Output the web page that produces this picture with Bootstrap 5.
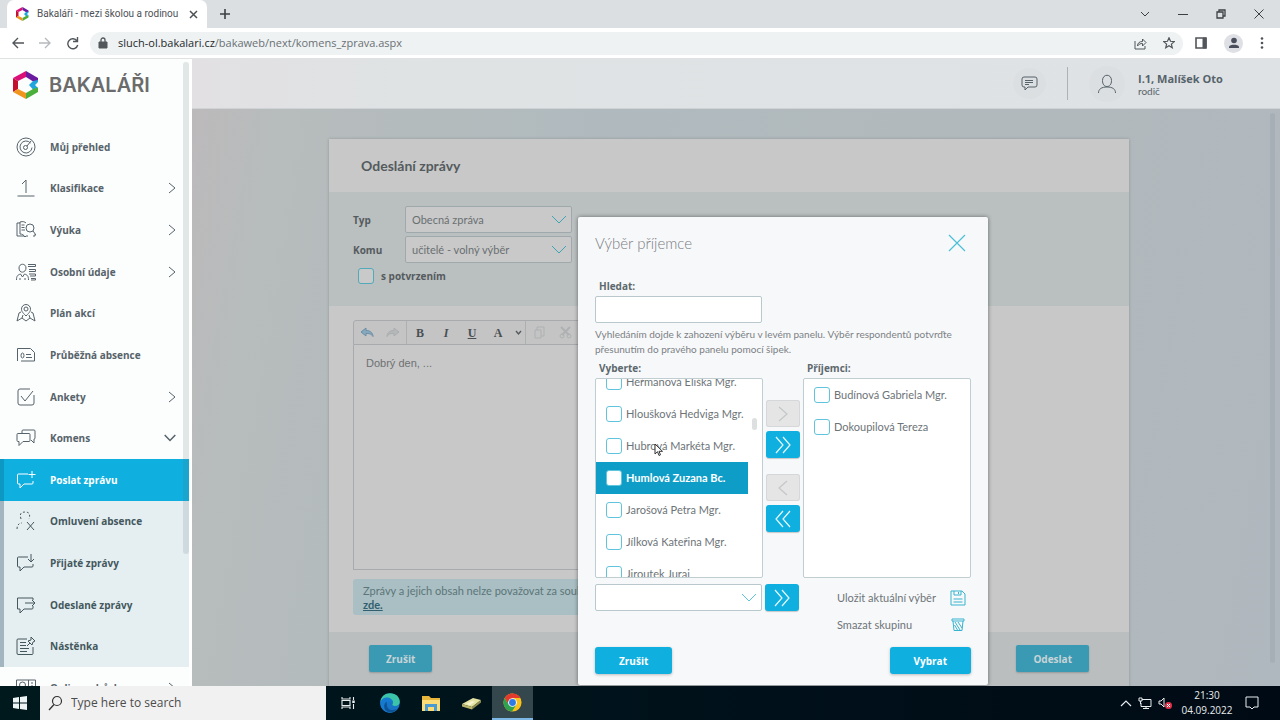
<!DOCTYPE html>
<html lang="cs">
<head>
<meta charset="utf-8">
<meta name="viewport" content="width=device-width, initial-scale=1">
<title>Bakaláři - mezi školou a rodinou</title>
<link rel="stylesheet" href="https://cdn.jsdelivr.net/npm/bootstrap@5.3.0/dist/css/bootstrap.min.css">
<style>
:root{--ui:"Open Sans","Noto Sans",sans-serif;--app:Lato,"Noto Sans",sans-serif;--blue:#0fb0e0;--ink:#56636a}
body{font-family:var(--app);font-size:11px;line-height:16px;color:var(--ink)}
svg{display:block;flex:none;fill:none;stroke:currentColor;stroke-width:1}
button{font:inherit;color:inherit}
.bare{background:none;border:0;padding:0}
.strong{font:700 10px/16px var(--ui)}
.solid{stroke:none}
/* browser */
.tabstrip{background:#dbdfe2;height:28px;color:#3c4043}
.tab-on{background:#fff;width:200px;height:28px;margin-left:7px;padding:0 9px;border-radius:7px 7px 0 0;font:10px/16px Roboto,sans-serif;color:#4d5154}
.toolbar{background:#fff;height:31px;border-bottom:1px solid #dfe1e3;color:#51565a;font-family:var(--ui)}
.nav-btns{padding:0 7px 0 12px;gap:15px}
.address{background:#eef2f3;height:23px;border-radius:12px;font-size:11px}
.address a{color:#6b7074;padding-left:2px}
.host{color:#25282a}
.tool-end{gap:17px;padding:0 16px 0 12px}
.avatar-sm{width:19px;height:19px;border-radius:50%;background:#dfe0e6}
/* sidebar */
.screen{min-height:0;background:#b5babd}
.side{width:192px;background:#fcfdfd;border-right:3px solid #fff;overflow:hidden}
.logo-text{font:600 20px/24px Inter,sans-serif;color:#6b6b6b;margin-left:2px}
.brand-row{height:51px;padding-left:13px}
.side-list{padding-top:16px}
.menu-a{min-height:333px}
.menu-b{min-height:208px;background:#e5eff2}
.side-list a{flex:1 0 auto;display:flex;align-items:center;gap:14px;padding:0 13px 0 16px;color:var(--ink);text-decoration:none;font:700 10px/16px var(--ui)}
.side-list .menu-b a{border-left:4px solid #a3b6bf;padding-left:12px;color:#44575c}
.side-list .menu-b a.here{background:var(--blue);color:#fff;border-color:#0d98c4}
.side-list .side-next a{height:42px}
.side-scroll{position:absolute;left:183px;top:3px;width:6px;height:492px;border-radius:3px;background:rgba(90,110,120,.16)}
/* app */
.app{min-width:0;background:linear-gradient(100deg,#bdb9bb 0,#b7bcbc 8%,#b0babe 35%,#b2b9bc 70%,#b0b8bf 100%)}
.app-head{height:50px;background:linear-gradient(90deg,#e2e0e3,#dfe3e4 20%,#dfe2e5);border-bottom:1px solid #cfd3d5}
.round-ico{border-radius:50%;background:#dcdfe1}
.head-line{width:1px;height:33px;background:#adb3b5;margin:0 21px}
.user-info{width:155px;padding:2px 0 0 13px;line-height:13px;font-size:10px}
.user-info .strong{font-size:11px;line-height:13px}
.page-wrap{padding:30px 14px 0 0}
.msg{width:800px;background:#c8c8c8;box-shadow:0 0 3px rgba(0,0,0,.2);color:#545b5e}
.msg-title{font-size:14px;line-height:20px;font-weight:700;padding:17px 32px 16px}
.msg-form{background:#babfc0;padding:14px 24px 0;height:114px}
.msg-body{padding:14px 24px 0;height:326px}
.msg-foot{background:#babebf;padding:13px 40px;height:56px}
.form-row{gap:0;margin-bottom:3px}
.form-key{width:52px}
.confirm{gap:7px;padding:2px 0 0 5px}
.drop{position:relative;width:167px}
.drop select{appearance:none;display:block;width:100%;height:27px;border:1px solid #9fa9ac;border-radius:2px;background:#c9c9c9;padding:0 6px;font-size:11px;line-height:16px;color:#697072}
.drop svg{position:absolute;right:5px;top:9px;color:#3fa3b5;pointer-events:none}
.tick{appearance:none;flex:none;width:16px;height:16px;border:1px solid #60c4dc;border-radius:3px;background:#fff;margin:0}
.dim-tick{background:#c9c9c9;border-color:#4fabba}
.editor{width:602px}
.ed-bar{height:25px;border:1px solid #a7abad;border-radius:3px 3px 0 0;background:#c4c4c4}
.ed-group{border-right:1px solid #adb0b1;height:23px}
.ed-undo{width:53px;padding:0 6px;gap:9px}
.ed-letters button{width:26px;font:700 12px/16px "Liberation Serif",serif;color:#4a4f55}
.ed-letters{width:119px}
.ed-copy{gap:14px;padding-left:8px;color:#aeb0b1}
.ed-text{display:block;width:100%;height:225px;resize:none;border:1px solid #a7abad;border-top:0;background:#c8c8c8;padding:10px 12px;font:11px/16px "Liberation Sans",sans-serif;color:#6e7172}
.note-box{width:602px;margin-top:9px;padding:5px 10px 4px;height:36px;line-height:14px;background:#a9bfc3;border-radius:3px;color:#5c7578;white-space:nowrap;overflow:hidden}
.note-box a{color:#32606f;font-weight:700}
.dim-btn{background:#3a9ab3;color:#c8d4d7;border-radius:2px;height:27px;border:0;box-shadow:0 1px 2px rgba(0,0,0,.2);padding:0 17px}
.app-scroll{position:absolute;right:5px;top:54px;width:5px;height:550px;border-radius:3px;background:#a6afb5}
/* dialog */
.picker{position:absolute;left:386px;top:158px;width:410px;background:#f7f8fa;border-radius:2px;box-shadow:0 0 4px rgba(0,0,0,.45);padding:0 17px;color:#6d7478}
.picker-head{height:52px;margin-bottom:7px;font-size:15px;line-height:20px;font-weight:300;color:#777c7f}
.field-key{font:700 10px/20px var(--ui);color:#5c686d;padding-left:4px;display:block}
.find{display:block;width:167px;height:27px;border:1px solid #b8c8cc;border-radius:2px;background:#fff;padding:0 6px}
.hint{font-size:10px;line-height:15px;margin:4px 0 1px;color:#7b8184}
.pane{width:168px;height:200px;border:1px solid #c0cdd1;border-radius:2px;background:#fff;overflow:hidden;position:relative}
.pane label{flex:none;height:32px;display:flex;align-items:center;gap:4px;padding-left:10px;color:#6d7478}
.pane label.chosen{background:#0e9dc7;color:#fff;font-weight:700;margin-right:14px}
.pane-thumb{position:absolute;right:5px;top:39px;width:5px;height:12px;border-radius:3px;background:#dedfe0}
.mover{width:34px;height:27px;border:0;border-radius:3px;background:var(--blue);color:#e8faff;box-shadow:0 1px 1px rgba(0,0,0,.2);padding:0;display:grid;place-items:center}
.mover:disabled{background:#e5e5e6;color:#c4c7c8;box-shadow:inset 0 0 0 1px #d5d7d8}
.picker .drop select{background:#fff;border-color:#b8c8cc}
.picker .drop svg{color:#5cc3dd}
.group-row{margin-top:6px;gap:3px}
.group-acts{width:129px;margin-right:5px}
.group-acts button{height:27px}
.picker-foot{margin-top:9px;padding-bottom:11px}
.act{height:27px;background:var(--blue);color:#fff;border:0;border-radius:3px;box-shadow:0 1px 3px rgba(0,0,0,.25);padding:0 24px}
.cyan{color:#39b3cf}
.cursor{position:absolute;left:462px;top:384px}
/* taskbar */
.taskbar{height:34px;background:linear-gradient(90deg,#00191c,#00101a 60%,#000a14);font-family:var(--ui);color:#e8ecee}
.start{width:40px;display:grid;place-items:center}
.search{width:286px;margin-right:2px;background:#f1f1f1;color:#333}
.search input{background:none;border:0;outline:0;width:200px;padding:0;font-size:12px}
.search input::placeholder{color:#4c4c4c;opacity:1}
.task{width:41px;display:grid;place-items:center}
.task-on{background:#33474c;border-bottom:2px solid #7db7e6}
.tray{gap:6px;padding-right:21px}
.clock{width:56px;margin-right:4px;font-size:10px;line-height:15px;white-space:nowrap}
</style>
</head>
<body>
<svg width="0" height="0" class="position-absolute" aria-hidden="true">
<symbol id="hex" viewBox="0 0 26 28"><g stroke="none"><path d="M0 7l5 3v8l-5 3z" fill="#c3122f"/><path d="M13 0v6l-8 4-5-3z" fill="#dc0f78"/><path d="M13 0l12 7v3l-4 1-8-5z" fill="#6a1ba0"/><path d="M25 9v2l-3 3 3 3-5 1.500-4-4.500 4-4z" fill="#1fa6dc"/><path d="M25 16.500V21l-12 7v-6l7-4z" fill="#4caf3c"/><path d="M0 21l5-3 8 4v6z" fill="#f0961f"/></g></symbol>
<symbol id="down" viewBox="0 0 16 10"><path d="M1 1l7 7 7-7"/></symbol>
<symbol id="right" viewBox="0 0 8 12"><path d="M1 1l6 5-6 5"/></symbol>
<symbol id="dbl" viewBox="0 0 18 18"><path d="M2 1l7 8-7 8M9 1l7 8-7 8" stroke-width="1.200"/></symbol>
<symbol id="one" viewBox="0 0 12 16"><path d="M2 1l8 7-8 7" stroke-width="1.200"/></symbol>
<symbol id="bubble" viewBox="0 0 20 20"><path d="M12 4H2.500Q1.500 4 1.500 5v8q0 1 1 1H4v4l4-4h8q1 0 1-1v-2"/></symbol>
</svg>

<div class="vh-100 d-flex flex-column overflow-hidden">
<header>
  <div class="tabstrip d-flex align-items-center">
    <div class="tab-on d-flex align-items-center">
      <svg width="13" height="14"><use href="#hex"/></svg>
      <span class="ms-2 text-nowrap flex-fill">Bakaláři - mezi školou a rodinou</span>
      <button class="bare" aria-label="Zavřít kartu"><svg width="9" height="9"><path d="M1 1l7 7M8 1 1 8" stroke-width="1.500"/></svg></button>
    </div>
    <button class="bare ms-2 ps-1" aria-label="Nová karta"><svg width="12" height="12"><path d="M6 1v10M1 6h10" stroke-width="1.600"/></svg></button>
    <div class="ms-auto d-flex align-items-center gap-4 pe-3">
      <button class="bare me-1" aria-label="Karty"><svg width="10" height="10"><path d="M1 3l4 4 4-4"/></svg></button>
      <button class="bare me-1" aria-label="Minimalizovat"><svg width="10" height="10"><path d="M0 5.500h10"/></svg></button>
      <button class="bare me-1" aria-label="Obnovit"><svg width="10" height="10"><path d="M1 3h6v6H1zM3 3V1h6v6H7" stroke-width="1.300"/></svg></button>
      <button class="bare" aria-label="Zavřít"><svg width="10" height="10"><path d="M.5.5l9 9M9.500.5l-9 9"/></svg></button>
    </div>
  </div>
  <div class="toolbar d-flex align-items-center">
    <div class="nav-btns d-flex align-items-center">
      <button class="bare" aria-label="Zpět"><svg width="12" height="12"><path d="M12 6H1.500M6 1 1 6l5 5" stroke-width="1.400"/></svg></button>
      <button class="bare" aria-label="Vpřed"><svg width="12" height="12" color="#b6babd"><path d="M0 6h10.500M6 1l5 5-5 5" stroke-width="1.400"/></svg></button>
      <button class="bare" aria-label="Obnovit stránku"><svg width="13" height="13"><path d="M11 4a5 5 0 1 0 .7 4M11.500 0v4.500H7" stroke-width="1.400"/></svg></button>
    </div>
    <div class="address flex-fill d-flex align-items-center ms-1">
      <svg class="ms-2 me-2" width="10" height="12"><path d="M1 5h8v6H1z" fill="currentColor"/><path d="M3 5V3a2 2 0 0 1 4 0v2" stroke-width="1.300"/></svg>
      <a href="#" class="text-decoration-none flex-fill"><span class="host">sluch-ol.bakalari.cz</span>/bakaweb/next/komens_zprava.aspx</a>
      <svg class="me-3" width="13" height="13"><path d="M1 4v8h10V9M3.500 9c0-3 2-4.500 5-4.500V2l3.500 3.500L8.500 9V6.500C6.500 6.500 5 7 3.500 9z"/></svg>
      <svg class="me-2" width="12" height="12"><path d="M6 .8l1.500 3.500 3.800.3-2.900 2.500.9 3.700L6 8.800l-3.300 2 .9-3.700L.7 4.600l3.800-.3z" stroke-width="1.200"/></svg>
    </div>
    <div class="tool-end d-flex align-items-center">
      <svg width="12" height="12"><path d="M1 1h10v10H1z" stroke-width="1.600"/><path d="M8 1h3v10H8z" fill="currentColor"/></svg>
      <span class="avatar-sm d-flex align-items-center justify-content-center"><svg class="solid" width="12" height="12"><circle cx="6" cy="3.500" r="2.800" fill="#4a4d5c"/><path d="M1 11V9.500C2 7 10 7 11 9.500V11z" fill="#4a4d5c"/></svg></span>
      <button class="bare" aria-label="Nabídka"><svg class="solid" width="4" height="12"><g fill="#505458"><circle cx="2" cy="1.500" r="1.300"/><circle cx="2" cy="6" r="1.300"/><circle cx="2" cy="10.500" r="1.300"/></g></svg></button>
    </div>
  </div>
</header>

<div class="screen d-flex flex-fill overflow-hidden">
<aside class="side flex-shrink-0 position-relative">
  <div class="brand-row d-flex align-items-center gap-2"><svg width="26" height="28"><use href="#hex"/></svg><span class="logo-text">BAKALÁŘI</span></div>
  <nav class="side-list">
    <div class="menu-a d-flex flex-column">
      <a href="#"><svg width="20" height="20"><circle cx="10" cy="10" r="9"/><path d="M14.500 6A6 6 0 1 0 16 10.500"/><circle cx="9.500" cy="10.500" r="2"/><path d="M11 9l4-5"/></svg><span>Můj přehled</span></a>
      <a href="#"><svg width="20" height="20"><path d="M6 6l4-4v13M1.500 18h17"/></svg><span class="flex-fill">Klasifikace</span><svg width="8" height="12"><use href="#right"/></svg></a>
      <a href="#"><svg width="20" height="20"><path d="M4 3H1v13h7l1 1 1-1h2M4 14V2c3-1 5 0 6 1M9 17c-1-2-3-3-5-3M5.500 5h3M5.500 7.500h3M5.500 10H9M17 16h2v-2"/><circle cx="14" cy="8" r="4"/><path d="M17 11l3 4"/></svg><span class="flex-fill">Výuka</span><svg width="8" height="12"><use href="#right"/></svg></a>
      <a href="#"><svg width="20" height="20"><path d="M3 6c0-5 7-5 7 0s-7 6-7 0zM.5 18c0-4 1-5 4-6l2 3 2-3c3 1 4 2 4 6M4 18v-2M9 18v-2M12 2.500h7.500v2H12M13 7.500h6.500v2H13M13 12h6.500v2H14M15 16.500h4.500V18H15"/></svg><span class="flex-fill">Osobní údaje</span><svg width="8" height="12"><use href="#right"/></svg></a>
      <a href="#"><svg width="20" height="20"><path d="M10 13C6 9 5.500 8 5.500 6a4.500 4.500 0 0 1 9 0c0 2-.5 3-4.500 7zM5 9l-2 1-2 8 5-3 4 3 4-3 5 3-2-8-2-1M6 15l1-3M14 15l-1-3"/><circle cx="10" cy="6" r="2"/></svg><span>Plán akcí</span></a>
      <a href="#"><svg width="20" height="20"><path d="M1.500 16V3.500h13l4 4V16H5M10 9.500h5M10 12.500h6"/><ellipse cx="6.500" cy="10.500" rx="1.500" ry="2.500"/></svg><span>Průběžná absence</span></a>
      <a href="#"><svg width="20" height="20"><path d="M14 2H4Q2 2 2 4v12q0 2 2 2h12q2 0 2-2V8M5 9l4 5 8-10"/></svg><span class="flex-fill">Ankety</span><svg width="8" height="12"><use href="#right"/></svg></a>
      <a href="#"><svg width="20" height="20"><path d="M6 5V3q0-1 1-1h11q1 0 1 1v7q0 1-1 1v4l-3-3M2 5.500h11q1 0 1 1v6q0 1-1 1H7l-4 4v-4H2q-1 0-1-1v-6q0-1 1-1z"/></svg><span class="flex-fill">Komens</span><svg width="12" height="8"><path d="M.7 1 6 6.500 11.300 1" stroke-width="1.500"/></svg></a>
    </div>
    <div class="menu-b d-flex flex-column">
      <a href="#" class="here"><svg width="20" height="20"><use href="#bubble"/><path d="M16 1v7M12.500 4.500h7"/></svg><span>Poslat zprávu</span></a>
      <a href="#"><svg width="20" height="20"><path d="M5 8C3 2 6 1 9 1s6 1 4 7M1 18c0-4 2-6 5-6" stroke-dasharray="2 2"/><path d="M11 11l7 8M18 11l-7 8"/></svg><span>Omluvení absence</span></a>
      <a href="#"><svg width="20" height="20"><use href="#bubble"/><path d="M15 1v8M12 6l3 3 3-3"/></svg><span>Přijaté zprávy</span></a>
      <a href="#"><svg width="20" height="20"><path d="M17 5V3H1.500v11H4v4l4-4h8q1 0 1-1v-2M9 8h10M16 5l3 3-3 3"/></svg><span>Odeslané zprávy</span></a>
      <a href="#"><svg width="20" height="20"><path d="M11 3H2q-1 0-1 1v13q0 1.500 1 1.500h14q1 0 1-1V11M4 6.500h6M4 9.500h6M4 12.500h9M4 15.500h7M11 10l3-3M15 1l4 4-2 1-1 3-4-4 3-1z"/></svg><span>Nástěnka</span></a>
    </div>
    <div class="side-next"><a href="#"><svg width="20" height="20"><path d="M.5 2h19v14H.5zM12.500 2v14M15 5h2M15 8h2M15 11h2"/><circle cx="6.500" cy="7" r="3"/></svg><span class="flex-fill">Online schůzky</span><svg width="8" height="12"><use href="#right"/></svg></a></div>
  </nav>
  <div class="side-scroll"></div>
</aside>

<main class="app flex-fill position-relative overflow-hidden">
  <div class="app-head d-flex align-items-center justify-content-end">
    <button class="bare round-ico p-2" aria-label="Zprávy"><svg width="17" height="15"><path d="M3 1h11q2 0 2 2v6q0 2-2 2H7l-3 3v-3H3q-2 0-2-2V3q0-2 2-2zM4 4.500h8M4 6.500h8M4 8.500h4"/></svg></button>
    <span class="head-line"></span>
    <span class="round-ico p-2"><svg width="20" height="20"><path d="M5.500 6.500c0-7 9-7 9 0 0 4-2 6-4.500 6s-4.500-2-4.500-6zM1.500 19c0-4 3-6 8.500-6s8.500 2 8.500 6"/></svg></span>
    <div class="user-info"><div class="strong">I.1, Malíšek Oto</div><div>rodič</div></div>
  </div>
  <div class="page-wrap">
    <section class="msg mx-auto">
      <h1 class="msg-title m-0">Odeslání zprávy</h1>
      <div class="msg-form">
        <div class="form-row d-flex align-items-center"><label class="form-key strong" for="typ">Typ</label><div class="drop"><select id="typ"><option>Obecná zpráva</option></select><svg width="16" height="10"><use href="#down"/></svg></div></div>
        <div class="form-row d-flex align-items-center"><label class="form-key strong" for="komu">Komu</label><div class="drop"><select id="komu"><option>učitelé - volný výběr</option></select><svg width="16" height="10"><use href="#down"/></svg></div></div>
        <div class="confirm d-flex align-items-center"><input class="tick dim-tick" type="checkbox" id="potv"><label for="potv" class="strong">s potvrzením</label></div>
      </div>
      <div class="msg-body">
        <div class="editor">
          <div class="ed-bar d-flex align-items-center">
            <div class="ed-group ed-undo d-flex align-items-center"><button class="bare" aria-label="Zpět"><svg width="16" height="12" color="#6c8ea5"><path d="M1 5l5-4v2.500c5 0 7 3 7 6-2-3-4-3-7-3V9z" fill="#86a9bd"/></svg></button><button class="bare" aria-label="Znovu"><svg width="16" height="12" color="#aaadae"><path d="M14 5 9 1v2.500c-5 0-7 3-7 6 2-3 4-3 7-3V9z" fill="#b5b8b9"/></svg></button></div>
            <div class="ed-group ed-letters d-flex align-items-center"><button class="bare">B</button><button class="bare fst-italic">I</button><button class="bare text-decoration-underline">U</button><button class="bare">A</button><svg class="ms-1" width="7" height="6"><path d="M1 1l2.500 3L6 1" stroke-width="1.400"/></svg></div>
            <div class="ed-copy d-flex align-items-center"><svg width="11" height="13"><path d="M1 4h6v8H1zM3 4V1h7v9H7"/></svg><svg width="13" height="13"><path d="M2 1l8 8M11 1 3 9" stroke-width="2"/><circle cx="3" cy="10" r="2"/><circle cx="10" cy="10" r="2"/></svg></div>
          </div>
          <textarea class="ed-text" aria-label="Text zprávy">Dobrý den, ...</textarea>
        </div>
        <div class="note-box">Zprávy a jejich obsah nelze považovat za soukromé. Více informací naleznete<br><a href="#">zde.</a></div>
      </div>
      <div class="msg-foot d-flex justify-content-between"><button class="dim-btn strong">Zrušit</button><button class="dim-btn strong">Odeslat</button></div>
    </section>
  </div>
  <div class="app-scroll"></div>

  <div class="picker" role="dialog" aria-labelledby="picker-title">
    <div class="picker-head d-flex align-items-center justify-content-between"><span id="picker-title">Výběr příjemce</span><button class="bare me-1" aria-label="Zavřít"><svg width="20" height="18" color="#4bbfd8"><path d="M2 1l16 16M18 1 2 17" stroke-width="1.200"/></svg></button></div>
    <label class="field-key" for="hledat">Hledat:</label>
    <input class="find" id="hledat" type="text">
    <p class="hint">Vyhledáním dojde k zahození výběru v levém panelu. Výběr respondentů potvrďte přesunutím do pravého panelu pomocí šipek.</p>
    <div class="d-flex justify-content-between">
      <div>
        <label class="field-key" for="p4">Vyberte:</label>
        <div class="pane d-flex flex-column justify-content-center">
          <label><input class="tick" type="checkbox">Heřmanová Eliška Mgr.</label>
          <label><input class="tick" type="checkbox">Hloušková Hedviga Mgr.</label>
          <label><input class="tick" type="checkbox">Hubrová Markéta Mgr.</label>
          <label class="chosen"><input class="tick" type="checkbox" id="p4">Humlová Zuzana Bc.</label>
          <label><input class="tick" type="checkbox">Jarošová Petra Mgr.</label>
          <label><input class="tick" type="checkbox">Jílková Kateřina Mgr.</label>
          <label><input class="tick" type="checkbox">Jiroutek Juraj</label>
          <span class="pane-thumb"></span>
        </div>
      </div>
      <div class="d-flex flex-column justify-content-center gap-3 pb-1">
        <div class="d-grid gap-1"><button class="mover" disabled aria-label="Přidat"><svg width="12" height="16"><use href="#one"/></svg></button><button class="mover" aria-label="Přidat vše"><svg width="18" height="18"><use href="#dbl"/></svg></button></div>
        <div class="d-grid gap-1"><button class="mover" disabled aria-label="Odebrat"><svg width="12" height="16"><path d="M10 1 2 8l8 7" stroke-width="1.200"/></svg></button><button class="mover" aria-label="Odebrat vše"><svg width="18" height="18"><path d="M16 1 9 9l7 8M9 1 2 9l7 8" stroke-width="1.200"/></svg></button></div>
      </div>
      <div>
        <label class="field-key" for="r1">Příjemci:</label>
        <div class="pane"><label><input class="tick" type="checkbox" id="r1">Budínová Gabriela Mgr.</label><label><input class="tick" type="checkbox">Dokoupilová Tereza</label></div>
      </div>
    </div>
    <div class="d-flex align-items-start group-row">
      <div class="drop"><select aria-label="Skupina"><option></option></select><svg width="16" height="10"><use href="#down"/></svg></div>
      <button class="mover" aria-label="Přidat skupinu"><svg width="18" height="18"><use href="#dbl"/></svg></button>
      <div class="group-acts ms-auto">
        <button class="bare d-flex align-items-center justify-content-between w-100"><span>Uložit aktuální výběr</span><svg class="cyan" width="16" height="16"><path d="M1 1h11l3 3v11H1zM4 1v4h7V1M8.500 2v2M3.500 9h9M3.500 12h9"/></svg></button>
        <button class="bare d-flex align-items-center justify-content-between w-100"><span>Smazat skupinu</span><svg class="cyan" width="16" height="16"><path d="M2 2h12v2H2zM3 4l1 9.500h8L13 4M5 5l5 8M8 5l4 6M4.500 8l3 5"/></svg></button>
      </div>
    </div>
    <div class="d-flex justify-content-between picker-foot"><button class="act strong">Zrušit</button><button class="act strong">Vybrat</button></div>
  </div>
  <svg class="cursor" width="10" height="14"><path d="M1 1v10l2.500-2.300L5 12.500l1.500-.7L5 8.300h3.500z" fill="#fff" stroke="#333"/></svg>
</main>
</div>

<footer class="taskbar d-flex flex-shrink-0">
  <button class="bare start" aria-label="Start"><svg class="solid" width="14" height="14"><path fill="#eef3f3" d="M0 2l6-1v5.600H0zM7 1l7-1v6.600H7zM0 7.500h6V13l-6-1zM7 7.500h7V14l-7-1z"/></svg></button>
  <label class="search d-flex align-items-center gap-2 ps-2"><svg width="15" height="16"><circle cx="9" cy="6" r="4.500" stroke-width="1.200"/><path d="M6 9.500l-5 5.500" stroke-width="1.300"/></svg><input type="text" placeholder="Type here to search" aria-label="Search"></label>
  <button class="bare task" aria-label="Task view"><svg width="15" height="14"><path d="M1 1v2h8V1M1 4.500h8v5H1zM1 13v-2h8v2M12.500 1v3M12.500 8v5" stroke-width="1.100"/><path d="M12.500 4.500v2.500" stroke-width="2.500"/></svg></button>
  <button class="bare task" aria-label="Edge"><svg class="solid" width="20" height="20"><circle cx="10" cy="10" r="9.800" fill="#1874c4"/><path d="M.3 9C1 3 5 .2 10 .2c6 0 10 4 9.800 8.800-.2 3-3 4.500-5.500 4-2-.4-2.500-1.200-1.500-2.500C14 7 10 5 6.500 6 3.500 6.500 1 8 .3 9z" fill="#3cc4a8"/><path d="M.3 9C2 5 5 4 8 4.500s5 3 4.500 5C10 7.500 7 9.500 7 12.500c.3 4 5 6 10 3.500-3 4-9 5-13 1.500C1 15.500.2 12 .3 9z" fill="#167bd0"/><path d="M7 12.500c.3 4 5 6 10 3.500-3 4-8 4.500-11.500 1.500-2-3-2-7 1.500-9-.5 1-.2 2.500 0 4z" fill="#0d5396"/></svg></button>
  <button class="bare task" aria-label="File Explorer"><svg class="solid" width="20" height="17"><path d="M1 1h7l2 2h9v13H1z" fill="#e9b63d"/><path d="M1 5h18v11H1z" fill="#fbdc77"/><path d="M4 16V9h12v7h-3v-4H7v4z" fill="#4a9bd4"/></svg></button>
  <button class="bare task" aria-label="Klíč"><svg class="solid" width="21" height="13"><path d="M1 7 12 1l8 2-9 7z" fill="#e5e3a2"/><path d="M1 7l10 3v2.500L1 9.500z" fill="#b9b66b"/><path d="M11 10l9-7v2.500l-9 7z" fill="#8f8d4f"/><path d="M5 7l6-3 3 .7-5 3.500z" fill="#f6f4cf"/></svg></button>
  <button class="bare task task-on" aria-label="Chrome"><svg class="solid" width="19" height="19" viewBox="0 0 20 20"><circle cx="10" cy="10" r="9.500" fill="#fbc11b"/><path d="M1.800 5.200A9.500 9.500 0 0 1 18.300 5.300H10L6 12.500z" fill="#e23b2e"/><path d="M1.800 5.200l4.300 7.200L14 12.300 9.500 19.500A9.500 9.500 0 0 1 1.800 5.200z" fill="#2ea24f"/><circle cx="10" cy="10" r="4.600" fill="#fff"/><circle cx="10" cy="10" r="3.600" fill="#2f7be6"/></svg></button>
  <div class="ms-auto d-flex align-items-center tray">
    <svg width="12" height="8"><path d="M1 7l5-5 5 5" stroke-width="1.200"/></svg>
    <svg width="14" height="12"><path d="M4 2.500h9v7H3V6M8 9.500v2M5 11.500h6M1 1h3v3H1zM2.500 4v3"/></svg>
    <svg width="15" height="14"><path d="M1 5h2l3-3v9L3 8H1z"/><circle cx="10.500" cy="9.500" r="3.500" fill="#e0314a" stroke="none"/><path d="M9 8l3 3M12 8l-3 3" stroke="#fff"/></svg>
    <div class="clock text-center">21:30<br>04.09.2022</div>
    <svg width="14" height="14"><path d="M1 1h12v10H9l-2 2-2-2H1z"/></svg>
  </div>
</footer>
</div>
<script src="https://cdn.jsdelivr.net/npm/bootstrap@5.3.0/dist/js/bootstrap.bundle.min.js"></script>
</body>
</html>
